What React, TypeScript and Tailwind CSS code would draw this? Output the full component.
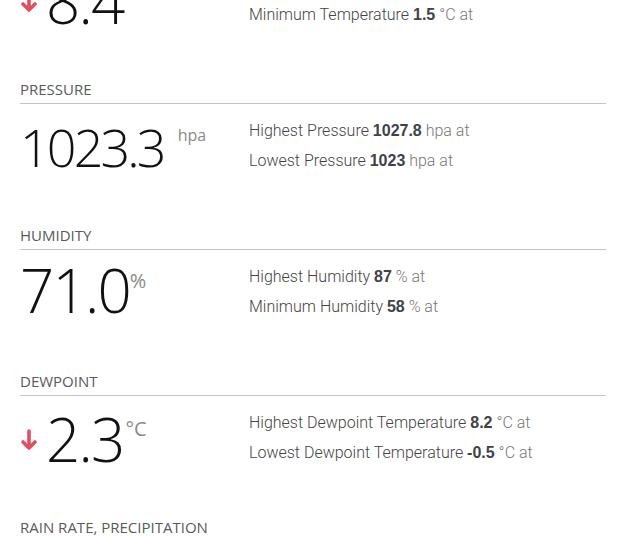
import React from 'react';

type Line = { label: string; value: string; unit: string };

interface StatProps {
  title: string;
  value: string;
  unit: string;
  trendDown?: boolean;
  numberClass: string;
  unitClass: string;
  lines: Line[];
}

const TrendDown = () => (
  <svg viewBox="0 0 18 24" className="mt-[20px] h-[24px] w-[18px] shrink-0" fill="none">
    <path d="M9 3v17M3 14l6 6 6-6" stroke="#e2505f" strokeWidth="3.6" strokeLinecap="round" strokeLinejoin="round" />
  </svg>
);

const StatSection: React.FC<StatProps> = ({ title, value, unit, trendDown, numberClass, unitClass, lines }) => (
  <section className="flex flex-col pb-[49px]">
    <div className="border-b border-[#c4c4c4] pb-[4px] text-[15px] leading-[20px] uppercase text-[#5a5a5a] font-['Open_Sans',sans-serif]">
      {title}
    </div>
    <div className="mt-3 flex h-[60px]">
      <div className="flex w-[229px] shrink-0 items-start">
        {trendDown && <TrendDown />}
        <div className={`flex items-start ${trendDown ? 'ml-[8px] mt-[3px]' : ''}`}>
          <span className={`font-['Open_Sans',sans-serif] font-[350] leading-none text-[#111] ${numberClass}`}>
            {value}
          </span>
          <span className={`font-['Open_Sans',sans-serif] font-normal leading-none text-[#8a8a8a] ${unitClass}`}>
            {unit}
          </span>
        </div>
      </div>
      <div className="font-['Roboto',Arial,sans-serif] font-light text-[16px] leading-[30px] text-[#444]">
        {lines.map((l) => (
          <div key={l.label}>
            {l.label}{' '}
            <b className="font-['Liberation_Sans',Arial,sans-serif] text-[16px] font-bold text-[#3e4349]">{l.value}</b>{' '}
            <span className="text-[#777]">{l.unit} at</span>
          </div>
        ))}
      </div>
    </div>
  </section>
);

export default function App() {
  return (
    <div className="h-[536px] w-[620px] overflow-hidden bg-white">
      <div className="-mt-[67px] pl-5 pr-[14px]">
        <StatSection
          title="Temperature"
          value="8.4"
          unit="°C"
          trendDown
          numberClass="-mt-[2px] text-[60px] tracking-[-0.03em]"
          unitClass="ml-[2px] mt-[8px] text-[20px]"
          lines={[
            { label: 'Highest Temperature', value: '8.9', unit: '°C' },
            { label: 'Minimum Temperature', value: '1.5', unit: '°C' },
          ]}
        />
        <StatSection
          title="Pressure"
          value="1023.3"
          unit="hpa"
          numberClass="mt-[5px] text-[52px] tracking-[-0.055em]"
          unitClass="ml-[14px] mt-[11px] text-[16px]"
          lines={[
            { label: 'Highest Pressure', value: '1027.8', unit: 'hpa' },
            { label: 'Lowest Pressure', value: '1023', unit: 'hpa' },
          ]}
        />
        <StatSection
          title="Humidity"
          value="71.0"
          unit="%"
          numberClass="-mt-[2px] text-[60px] tracking-[-0.03em]"
          unitClass="ml-0 mt-[9px] text-[20px]"
          lines={[
            { label: 'Highest Humidity', value: '87', unit: '%' },
            { label: 'Minimum Humidity', value: '58', unit: '%' },
          ]}
        />
        <StatSection
          title="Dewpoint"
          value="2.3"
          unit="°C"
          trendDown
          numberClass="-mt-[2px] text-[60px] tracking-[-0.03em]"
          unitClass="ml-[2px] mt-[8px] text-[20px]"
          lines={[
            { label: 'Highest Dewpoint Temperature', value: '8.2', unit: '°C' },
            { label: 'Lowest Dewpoint Temperature', value: '-0.5', unit: '°C' },
          ]}
        />
        <StatSection
          title="Rain Rate, Precipitation"
          value="0.0"
          unit="mm/h"
          numberClass="-mt-[2px] text-[60px] tracking-[-0.03em]"
          unitClass="ml-[2px] mt-[8px] text-[20px]"
          lines={[
            { label: 'Highest Rain Rate', value: '0.0', unit: 'mm/h' },
            { label: 'Total Precipitation', value: '0.0', unit: 'mm' },
          ]}
        />
      </div>
    </div>
  );
}
